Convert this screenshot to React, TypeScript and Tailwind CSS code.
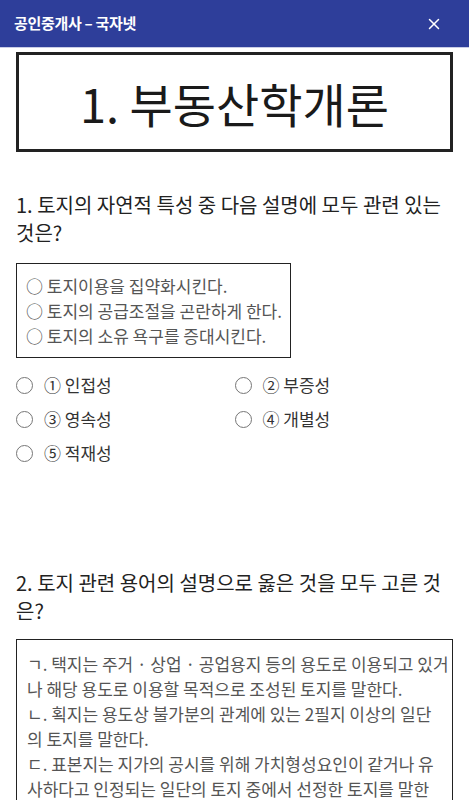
import { X } from 'lucide-react'

const font = { fontFamily: '"Noto Sans CJK KR", "Noto Sans", sans-serif' }

function Radio({ label }: { label: string }) {
  return (
    <label className="flex items-center gap-[11px] h-[34px]">
      <span className="w-[17px] h-[17px] rounded-full border border-[#767676] bg-white" />
      <span className="text-[17px] text-[#333]">{label}</span>
    </label>
  )
}

export default function App() {
  return (
    <div className="w-[469px] h-[800px] overflow-hidden bg-white" style={font}>
      <header className="h-[48px] bg-[#2e3e9a] border-b border-[#c9cde6] flex items-center justify-between pl-[14px] pr-[26px]">
        <span className="text-white text-[15px] font-bold tracking-[-0.3px]">공인중개사 – 국자넷</span>
        <X className="w-[18px] h-[18px] text-white" strokeWidth={2} />
      </header>
      <main className="px-[16px]">
        <div className="mt-[4px] h-[100px] border-[3px] border-[#222] flex items-center justify-center">
          <h1 className="text-[47px] text-[#1a1a1a] leading-none">1. 부동산학개론</h1>
        </div>

        <section className="mt-[39px]">
          <h2 className="text-[20px] leading-[28px] text-[#222]">1. 토지의 자연적 특성 중 다음 설명에 모두 관련 있는 것은?</h2>
          <div className="mt-[16px] w-[275px] border border-[#222] pl-[9px] pr-[2px] py-[9px] text-[17px] leading-[25px] text-[#555] whitespace-nowrap">
            <p>○ 토지이용을 집약화시킨다.</p>
            <p>○ 토지의 공급조절을 곤란하게 한다.</p>
            <p>○ 토지의 소유 욕구를 증대시킨다.</p>
          </div>
          <div className="mt-[10px] grid grid-cols-2">
            <Radio label="① 인접성" />
            <Radio label="② 부증성" />
            <Radio label="③ 영속성" />
            <Radio label="④ 개별성" />
            <Radio label="⑤ 적재성" />
          </div>
        </section>

        <section className="mt-[99px]">
          <h2 className="text-[20px] leading-[28px] text-[#222]">2. 토지 관련 용어의 설명으로 옳은 것을 모두 고른 것은?</h2>
          <div className="mt-[14px] border border-[#222] pl-[10px] pr-0 py-[11px] text-[17px] leading-[25px] text-[#555] whitespace-nowrap">
            <p>ㄱ. 택지는 주거 · 상업 · 공업용지 등의 용도로 이용되고 있거<br />나 해당 용도로 이용할 목적으로 조성된 토지를 말한다.</p>
            <p>ㄴ. 획지는 용도상 불가분의 관계에 있는 2필지 이상의 일단<br />의 토지를 말한다.</p>
            <p>ㄷ. 표본지는 지가의 공시를 위해 가치형성요인이 같거나 유<br />사하다고 인정되는 일단의 토지 중에서 선정한 토지를 말한<br />다.</p>
          </div>
        </section>
      </main>
    </div>
  )
}
